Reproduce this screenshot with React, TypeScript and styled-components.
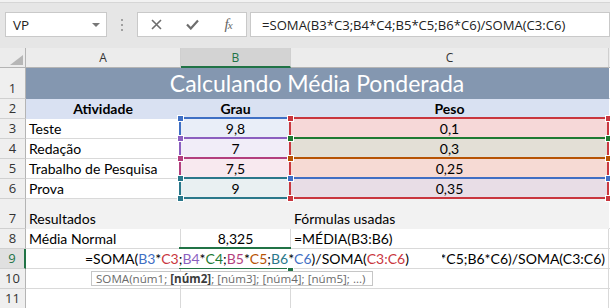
import React from 'react';
import styled, { createGlobalStyle } from 'styled-components';

// geometry of the sheet (px, right/bottom border included)
const COL_W = [26, 155, 110, 318];
const ROW_H = [20, 31, 20, 20, 20, 20, 20, 30, 20, 20, 20, 20];

const colStart = (i: number) => COL_W.slice(0, i).reduce((a, b) => a + b, 0);
const rowStart = (i: number) => ROW_H.slice(0, i).reduce((a, b) => a + b, 0);

const C = {
  blue: '#3f6fc4',
  red: '#c9363e',
  purple: '#8b5fbf',
  green: '#1d7a33',
  magenta: '#b33f7e',
  orange: '#b75304',
  teal: '#2a788b',
  sel: '#217346',
};

const GlobalStyle = createGlobalStyle`
  html, body { margin: 0; padding: 0; background: #fff; }
  body { overflow: hidden; }
  * { box-sizing: border-box; }
`;

const Window = styled.div`
  width: 610px;
  height: 308px;
  overflow: hidden;
  background: #fff;
  display: flex;
  flex-direction: column;
  font-family: "Open Sans", "Noto Sans", sans-serif;
`;

const FormulaBar = styled.div`
  height: 48px;
  flex: none;
  background: #e6e6e6;
  border-top: 2px solid #f2f2f2;
  box-shadow: inset 0 1px 0 #d6d6d6;
  display: flex;
  align-items: flex-start;
  padding: 10px 0 0 5px;
`;

const Box = styled.div<{ $w?: number }>`
  height: 25px;
  width: ${p => (p.$w ? `${p.$w}px` : 'auto')};
  flex: ${p => (p.$w ? 'none' : '1')};
  background: #fff;
  border: 1px solid #c9c9c9;
  display: flex;
  align-items: center;
`;

const NameText = styled.span`
  flex: 1;
  padding-left: 7px;
  font-size: 13.5px;
  color: #222;
`;

const Caret = styled.span`
  width: 0;
  height: 0;
  margin-right: 6px;
  border-left: 4px solid transparent;
  border-right: 4px solid transparent;
  border-top: 4px solid #777;
`;

const Grip = styled.div`
  width: 30px;
  height: 25px;
  flex: none;
  display: flex;
  flex-direction: column;
  align-items: center;
  justify-content: center;
  gap: 3px;
  & > i {
    width: 2px;
    height: 2px;
    background: #a0a0a0;
  }
`;

const IconBtn = styled.span`
  flex: 1;
  display: flex;
  align-items: center;
  justify-content: center;
  color: #6d6d6d;
`;

const Fx = styled.span`
  font-family: "Liberation Serif", "DejaVu Serif", serif;
  font-style: italic;
  font-size: 15px;
  color: #666;
  letter-spacing: -1px;
  & > small {
    font-size: 11px;
  }
`;

const FormulaText = styled.span`
  padding-left: 11px;
  font-size: 13.1px;
  color: #222;
  white-space: nowrap;
`;

const SheetWrap = styled.div`
  position: relative;
  flex: 1;
  overflow: hidden;
`;

const Sheet = styled.div`
  display: grid;
  grid-template-columns: ${COL_W.map(w => `${w}px`).join(' ')} 1fr;
  grid-template-rows: ${ROW_H.map(h => `${h}px`).join(' ')};
`;

const Corner = styled.div`
  background: #ececec;
  border-right: 1px solid #b4b4b4;
  border-bottom: 1px solid #b4b4b4;
  display: flex;
  align-items: flex-end;
  justify-content: flex-end;
  padding: 0 2px 2px 0;
`;

const ColHead = styled.div<{ $active?: boolean }>`
  background: ${p => (p.$active ? '#d3d3d3' : '#ececec')};
  border-right: 1px solid #cfcfcf;
  border-bottom: ${p => (p.$active ? `2px solid ${C.sel}` : '1px solid #b4b4b4')};
  display: flex;
  align-items: center;
  justify-content: center;
  font-size: 12px;
  color: ${p => (p.$active ? C.sel : '#333')};
`;

const RowHead = styled.div<{ $active?: boolean }>`
  background: ${p => (p.$active ? '#e0e0e0' : '#efefef')};
  border-right: ${p => (p.$active ? `2px solid ${C.sel}` : '1px solid #b4b4b4')};
  border-bottom: 1px solid #d0d0d0;
  display: flex;
  align-items: flex-end;
  justify-content: center;
  padding-bottom: 1px;
  font-size: 13px;
  line-height: 17px;
  color: ${p => (p.$active ? C.sel : '#333')};
`;

const Cell = styled.div<{ $fill?: string; $align?: string; $bold?: boolean; $span?: number }>`
  grid-column: span ${p => p.$span ?? 1};
  background: ${p => p.$fill ?? '#fff'};
  border-right: 1px solid ${p => p.$fill ?? '#d9d9d9'};
  border-bottom: 1px solid ${p => p.$fill ?? '#d9d9d9'};
  display: flex;
  align-items: flex-end;
  justify-content: ${p => p.$align ?? 'flex-start'};
  padding: 0 3px 1px 3px;
  font-family: Lato, "Open Sans", sans-serif;
  font-size: 14px;
  line-height: 17px;
  font-weight: ${p => (p.$bold ? 700 : 400)};
  color: #000;
  white-space: nowrap;
  overflow: hidden;
`;

const Title = styled.span`
  font-family: Lato, "Open Sans", sans-serif;
  font-size: 23px;
  line-height: 28px;
  color: #fff;
`;

const Range = styled.div<{ $c: string }>`
  position: absolute;
  border: 2px solid ${p => p.$c};
`;

const Handle = styled.div<{ $c: string }>`
  position: absolute;
  width: 7px;
  height: 7px;
  background: ${p => p.$c};
  border: 1px solid #fff;
`;

const Editor = styled.div`
  position: absolute;
  background: #fff;
  display: flex;
  align-items: flex-end;
  padding: 0 0 1px 59px;
  font-family: Lato, "Open Sans", sans-serif;
  font-size: 14px;
  line-height: 17px;
  white-space: nowrap;
  color: #000;
`;

const Ref = styled.span<{ $c: string }>`
  color: ${p => p.$c};
`;

const Tip = styled.div`
  position: absolute;
  background: #fff;
  border: 1px solid #c6c6c6;
  padding: 0 4px;
  display: flex;
  align-items: center;
  overflow: hidden;
  font-size: 11.6px;
  color: #6b6b6b;
  white-space: nowrap;
  & > b {
    color: #3c3c3c;
  }
`;

type Def = { t?: React.ReactNode; fill?: string; align?: string; bold?: boolean; span?: number };

const FILL_HEAD = '#d9e1f2';
const FILL_GRAY = '#f2f2f2';

const rows: Def[][] = [
  [{ t: <Title>Calculando Média Ponderada</Title>, fill: '#8497b0', align: 'center', span: 3 }],
  [
    { t: 'Atividade', fill: FILL_HEAD, align: 'center', bold: true },
    { t: 'Grau', fill: FILL_HEAD, align: 'center', bold: true },
    { t: 'Peso', fill: FILL_HEAD, align: 'center', bold: true },
  ],
  [{ t: 'Teste' }, { t: '9,8', fill: '#e9eef8', align: 'center' }, { t: '0,1', fill: '#f6d8d8', align: 'center' }],
  [{ t: 'Redação' }, { t: '7', fill: '#f1edf8', align: 'center' }, { t: '0,3', fill: '#e3dfd6', align: 'center' }],
  [{ t: 'Trabalho de Pesquisa' }, { t: '7,5', fill: '#f8e9ef', align: 'center' }, { t: '0,25', fill: '#f6dad4', align: 'center' }],
  [{ t: 'Prova' }, { t: '9', fill: '#e9f0f2', align: 'center' }, { t: '0,35', fill: '#e8dde6', align: 'center' }],
  [{ t: 'Resultados', fill: FILL_GRAY }, { fill: FILL_GRAY }, { t: 'Fórmulas usadas', fill: FILL_GRAY }],
  [{ t: 'Média Normal' }, { t: '8,325', align: 'center' }, { t: '=MÉDIA(B3:B6)' }],
  [{}, {}, { t: '=SOMA(B3*C3;B4*C4;B5*C5;B6*C6)/SOMA(C3:C6)', align: 'flex-end' }],
  [{}, {}, {}],
  [{}, {}, {}],
];

// row index in ROW_H: header = 0, sheet row n = n
const rect = (c0: number, r0: number, c1: number, r1: number) => ({
  left: colStart(c0) - 2,
  top: rowStart(r0) - 2,
  width: colStart(c1 + 1) - colStart(c0) + 2,
  height: rowStart(r1 + 1) - rowStart(r0) + 2,
});

const corners = (c0: number, r0: number, c1: number, r1: number) => {
  const xs = [colStart(c0) - 4, colStart(c1 + 1) - 4];
  const ys = [rowStart(r0) - 4, rowStart(r1 + 1) - 4];
  return [
    { left: xs[0], top: ys[0] },
    { left: xs[1], top: ys[0] },
    { left: xs[0], top: ys[1] },
    { left: xs[1], top: ys[1] },
  ];
};

const grauRefs = [C.blue, C.purple, C.magenta, C.teal];
const pesoRefs = [C.red, C.green, C.orange, C.blue];

const Highlights = () => (
  <>
    {grauRefs.map((c, i) => (
      <Range key={`b${i}`} $c={c} style={rect(2, 3 + i, 2, 3 + i)} />
    ))}
    {grauRefs.map((c, i) =>
      corners(2, 3 + i, 2, 3 + i).map((s, k) => <Handle key={`bh${i}${k}`} $c={c} style={s} />)
    )}
    <Range $c={C.red} style={rect(3, 3, 3, 6)} />
    {pesoRefs.slice(1).map((c, i) => {
      const r = rect(3, 4 + i, 3, 4 + i);
      return <Range key={`c${i}`} $c={c} style={{ ...r, height: 2, borderBottom: 'none' }} />;
    })}
    {pesoRefs.map((c, i) =>
      corners(3, 3 + i, 3, 3 + i)
        .slice(0, 2)
        .map((s, k) => <Handle key={`ch${i}${k}`} $c={c} style={s} />)
    )}
    {corners(3, 3, 3, 6)
      .slice(2)
      .map((s, k) => (
        <Handle key={`cr${k}`} $c={C.red} style={s} />
      ))}
  </>
);

export default function App() {
  const sel = rect(2, 9, 2, 9);
  const editTop = rowStart(9);
  return (
    <Window>
      <GlobalStyle />
      <FormulaBar>
        <Box $w={102}>
          <NameText>VP</NameText>
          <Caret />
        </Box>
        <Grip>
          <i />
          <i />
          <i />
        </Grip>
        <Box $w={110}>
          <IconBtn>
            <svg width="11" height="11" viewBox="0 0 11 11">
              <path d="M1 1 L10 10 M10 1 L1 10" stroke="currentColor" strokeWidth="1.6" />
            </svg>
          </IconBtn>
          <IconBtn>
            <svg width="13" height="11" viewBox="0 0 13 11">
              <path d="M1 5.5 L4.8 9.5 L12 1.5" stroke="currentColor" strokeWidth="2.2" fill="none" />
            </svg>
          </IconBtn>
          <IconBtn>
            <Fx>
              f<small>x</small>
            </Fx>
          </IconBtn>
        </Box>
        <Box style={{ marginLeft: 3 }}>
          <FormulaText>=SOMA(B3*C3;B4*C4;B5*C5;B6*C6)/SOMA(C3:C6)</FormulaText>
        </Box>
      </FormulaBar>
      <SheetWrap>
        <Sheet>
          <Corner>
            <svg width="13" height="10" viewBox="0 0 13 10">
              <polygon points="13,0 13,10 0,10" fill="#b6b6b6" />
            </svg>
          </Corner>
          <ColHead>A</ColHead>
          <ColHead $active>B</ColHead>
          <ColHead>C</ColHead>
          <ColHead />
          {rows.map((cells, i) => (
            <React.Fragment key={i}>
              <RowHead $active={i + 1 === 9}>{i + 1}</RowHead>
              {cells.map((d, k) => (
                <Cell key={k} $fill={d.fill} $align={d.align} $bold={d.bold} $span={d.span}>
                  {d.t}
                </Cell>
              ))}
              <Cell />
            </React.Fragment>
          ))}
        </Sheet>
        <Highlights />
        <Range $c={C.sel} style={sel} />
        <Handle $c={C.sel} style={corners(2, 9, 2, 9)[3]} />
        <Editor style={{ left: colStart(1), top: editTop, width: 416, height: ROW_H[9] - 1 }}>
          =SOMA(<Ref $c={C.blue}>B3</Ref>*<Ref $c={C.red}>C3</Ref>;<Ref $c={C.purple}>B4</Ref>*
          <Ref $c={C.green}>C4</Ref>;<Ref $c={C.magenta}>B5</Ref>*<Ref $c={C.orange}>C5</Ref>;
          <Ref $c={C.teal}>B6</Ref>*<Ref $c={C.blue}>C6</Ref>)/SOMA(<Ref $c={C.red}>C3:C6</Ref>)
        </Editor>
        <Tip style={{ left: 91, top: 223, width: 282, height: 15 }}>
          SOMA(núm1;&nbsp;<b>[núm2]</b>; [núm3]; [núm4]; [núm5]; ...)
        </Tip>
      </SheetWrap>
    </Window>
  );
}
